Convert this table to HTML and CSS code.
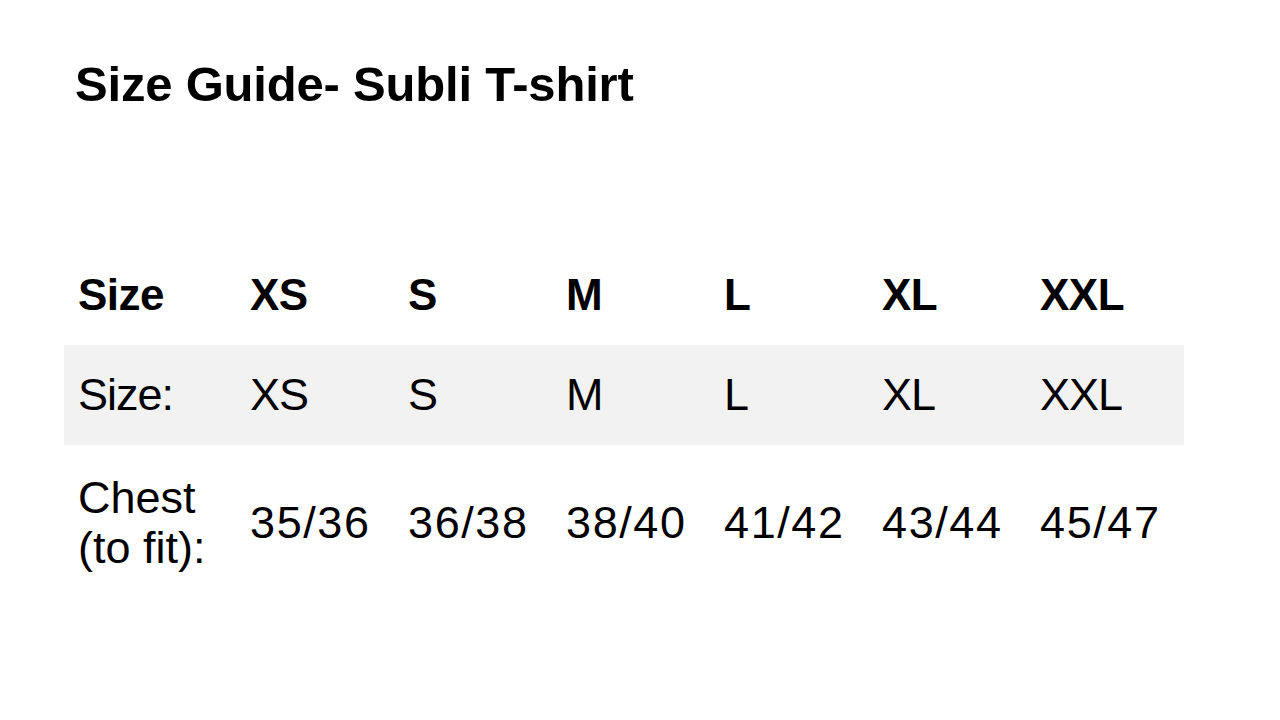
FILE: index.html
```html
<!DOCTYPE html>
<html lang="en">
<head>
<meta charset="utf-8">
<title>Size Guide- Subli T-shirt</title>
<link rel="stylesheet" href="styles.css">
</head>
<body>
<main class="page">
  <h1 class="title">Size Guide- Subli T-shirt</h1>
  <div class="table">
    <div class="row head">
      <div class="cell">Size</div>
      <div class="cell">XS</div>
      <div class="cell">S</div>
      <div class="cell">M</div>
      <div class="cell">L</div>
      <div class="cell">XL</div>
      <div class="cell">XXL</div>
    </div>
    <div class="row shaded">
      <div class="cell">Size:</div>
      <div class="cell">XS</div>
      <div class="cell">S</div>
      <div class="cell">M</div>
      <div class="cell">L</div>
      <div class="cell">XL</div>
      <div class="cell">XXL</div>
    </div>
    <div class="row tall">
      <div class="cell label">Chest<br>(to fit):</div>
      <div class="cell num">35/36</div>
      <div class="cell num">36/38</div>
      <div class="cell num">38/40</div>
      <div class="cell num">41/42</div>
      <div class="cell num">43/44</div>
      <div class="cell num">45/47</div>
    </div>
  </div>
</main>
</body>
</html>
```

FILE: styles.css
```css
html, body {
  margin: 0;
  padding: 0;
  background: #ffffff;
}

body {
  font-family: "Liberation Sans", Arial, Helvetica, sans-serif;
  color: #000000;
}

.page {
  width: 1280px;
  height: 720px;
  padding: 56px 0 0 64px;
  box-sizing: border-box;
}

.title {
  margin: 0 0 0 11px;
  font-size: 49px;
  line-height: 56px;
  font-weight: 700;
  letter-spacing: -0.2px;
}

.table {
  margin-top: 133px;
  width: 1120px;
}

.row {
  display: grid;
  grid-template-columns: 172px repeat(6, 158px);
  align-items: center;
}

.cell {
  padding-left: 14px;
  font-size: 45px;
  line-height: 50px;
  letter-spacing: -1px;
}

.head {
  height: 100px;
}

.head .cell {
  font-size: 44px;
  font-weight: 700;
  letter-spacing: -0.5px;
}

.shaded {
  height: 100px;
  background: #f2f2f2;
}

.tall {
  height: 155px;
}

.label {
  letter-spacing: 0;
}

.num {
  letter-spacing: 1.6px;
}
```
